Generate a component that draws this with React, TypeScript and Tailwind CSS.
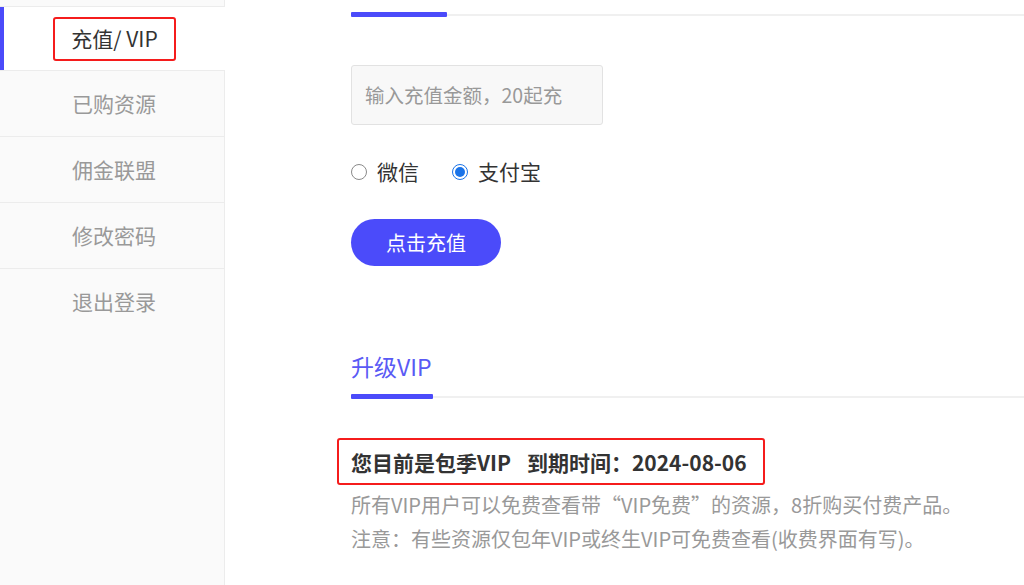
import React from "react";

const font = { fontFamily: '"Noto Sans CJK SC", "Noto Sans", sans-serif' };

function SideItem({ label, last }: { label: string; last?: boolean }) {
  return (
    <div
      className={`h-[66px] pl-[4px] flex items-center justify-center text-[21px] text-[#999] ${
        last ? "" : "border-b border-[#ececec]"
      }`}
    >
      {label}
    </div>
  );
}

function Radio({ checked, label }: { checked?: boolean; label: string }) {
  return (
    <div className="flex items-center gap-[10px]">
      <span
        className={`w-[16px] h-[16px] rounded-full border flex items-center justify-center bg-white ${
          checked ? "border-[#1a73e8]" : "border-[#8a8a8a]"
        }`}
      >
        {checked && <span className="w-[10px] h-[10px] rounded-full bg-[#1a73e8]" />}
      </span>
      <span className="text-[21px] text-[#333]">{label}</span>
    </div>
  );
}

export default function App() {
  return (
    <div className="w-[1024px] h-[585px] overflow-hidden bg-white flex" style={font}>
      <aside className="w-[225px] shrink-0 bg-[#fafafa] border-r border-[#ececec] flex flex-col">
        <div className="h-[7px] border-b border-[#ececec]" />
        <div className="h-[64px] -mr-px pl-[4px] bg-white shadow-[inset_4px_0_0_#4b4bfa] flex items-center justify-center border-b border-[#ececec]">
          <span className="border-2 border-[#f51c1c] rounded-[3px] w-[123px] h-[44px] flex items-center justify-center text-[21px] text-[#333]">
            充值/ VIP
          </span>
        </div>
        <SideItem label="已购资源" />
        <SideItem label="佣金联盟" />
        <SideItem label="修改密码" />
        <SideItem label="退出登录" last />
      </aside>

      <main className="flex-1 pl-[126px] flex flex-col">
        <div className="relative h-[5px] mt-[12px]">
          <div className="absolute left-0 right-0 top-[2px] h-[2px] bg-[#f0f0f0]" />
          <div className="absolute left-0 top-0 w-[96px] h-[5px] rounded-[1px] bg-[#4b4bfa]" />
        </div>

        <div className="mt-[48px] w-[252px] h-[60px] bg-[#f8f8f8] border border-[#e2e2e2] rounded-[3px] flex items-center pl-[13px] text-[19.5px] text-[#999]">
          输入充值金额，20起充
        </div>

        <div className="mt-[34px] h-[26px] flex items-center gap-[33px]">
          <Radio label="微信" />
          <Radio checked label="支付宝" />
        </div>

        <div className="mt-[34px]">
          <button className="w-[150px] h-[47px] rounded-full bg-[#4b4bfa] text-white text-[20px] flex items-center justify-center">
            点击充值
          </button>
        </div>

        <div className="mt-[84px] text-[23px] text-[#5a5af5] leading-[32px]">升级VIP</div>

        <div className="relative h-[5px] mt-[12px]">
          <div className="absolute left-0 right-0 top-[2px] h-[2px] bg-[#f0f0f0]" />
          <div className="absolute left-0 top-0 w-[82px] h-[5px] rounded-[1px] bg-[#4b4bfa]" />
        </div>

        <div className="mt-[39px] -ml-[14px]">
          <div className="inline-flex items-center h-[47px] w-[428px] border-2 border-[#f51c1c] rounded-[3px] pl-[12px] pt-[2px] text-[21px] font-bold text-[#333]">
            您目前是包季VIP<span className="inline-block w-[16px]" />到期时间：2024-08-06
          </div>
        </div>

        <div className="mt-[3px] text-[20px] leading-[34px] text-[#999]">
          <p>所有VIP用户可以免费查看带“VIP免费”的资源，8折购买付费产品。</p>
          <p>注意：有些资源仅包年VIP或终生VIP可免费查看(收费界面有写)。</p>
        </div>
      </main>
    </div>
  );
}
